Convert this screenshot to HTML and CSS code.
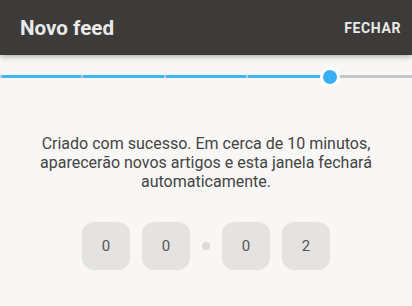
FILE: index.html
```html
<!DOCTYPE html>
<html lang="pt">
<head>
<meta charset="utf-8">
<title>Novo feed</title>
<link rel="stylesheet" href="styles.css">
</head>
<body>
<header class="topbar">
  <h1 class="title">Novo feed</h1>
  <button class="close">FECHAR</button>
</header>
<main class="content">
  <div class="slider">
    <div class="track-active" style="width: 80%"></div>
    <span class="tick" style="left: 0%"></span>
    <span class="tick" style="left: 20%"></span>
    <span class="tick" style="left: 40%"></span>
    <span class="tick" style="left: 60%"></span>
    <span class="thumb" style="left: 80%"></span>
  </div>
  <p class="message">Criado com sucesso. Em cerca de 10 minutos, aparecerão novos artigos e esta janela fechará automaticamente.</p>
  <div class="timer">
    <div class="digit">0</div>
    <div class="digit">0</div>
    <div class="sep"></div>
    <div class="digit">0</div>
    <div class="digit">2</div>
  </div>
</main>
</body>
</html>
```
FILE: styles.css
```css
* { box-sizing: border-box; }
html, body {
  margin: 0;
  padding: 0;
  background: #f8f7f5;
  font-family: Roboto, "Liberation Sans", Arial, sans-serif;
}
body {
  width: 412px;
  height: 306px;
  overflow: hidden;
}
.topbar {
  height: 55px;
  background: #3c3b39;
  display: flex;
  align-items: center;
  justify-content: space-between;
  padding: 0 11px 0 20px;
  box-shadow: 0 2px 5px rgba(0,0,0,0.28);
  position: relative;
  z-index: 1;
}
.title {
  margin: 0;
  padding-top: 1px;
  font-size: 20.6px;
  font-weight: 700;
  color: #eaeaea;
  line-height: normal;
}
.close {
  border: 0;
  background: none;
  padding: 0;
  font-family: inherit;
  font-size: 14px;
  font-weight: 700;
  letter-spacing: 0.6px;
  color: #eaeaea;
  line-height: normal;
}
.content {
  display: flex;
  flex-direction: column;
  align-items: center;
}
.slider {
  position: relative;
  width: 100%;
  height: 3px;
  margin-top: 20px;
  background: #c6c6c6;
}
.track-active {
  height: 100%;
  background: #3eb7f5;
}
.tick {
  position: absolute;
  top: 0;
  width: 2px;
  height: 3px;
  background: #c6c6c6;
}
.tick:not(:first-of-type) { margin-left: -1px; }
.thumb {
  position: absolute;
  top: 50%;
  width: 20px;
  height: 20px;
  margin: -10px 0 0 -10px;
  border-radius: 50%;
  background: #3aaff3;
  border: 3px solid #ffffff;
}
.message {
  margin: 56px 0 0;
  padding: 0 20px;
  text-align: center;
  font-size: 16px;
  line-height: normal;
  color: #444444;
}
.timer {
  margin-top: 31px;
  display: flex;
  align-items: center;
  gap: 12px;
}
.digit {
  width: 48px;
  height: 48px;
  border-radius: 12px;
  background: #e4e3e1;
  display: flex;
  align-items: center;
  justify-content: center;
  font-size: 15px;
  color: #555555;
}
.sep {
  width: 8px;
  height: 8px;
  border-radius: 50%;
  background: #dcdbd9;
}
```
